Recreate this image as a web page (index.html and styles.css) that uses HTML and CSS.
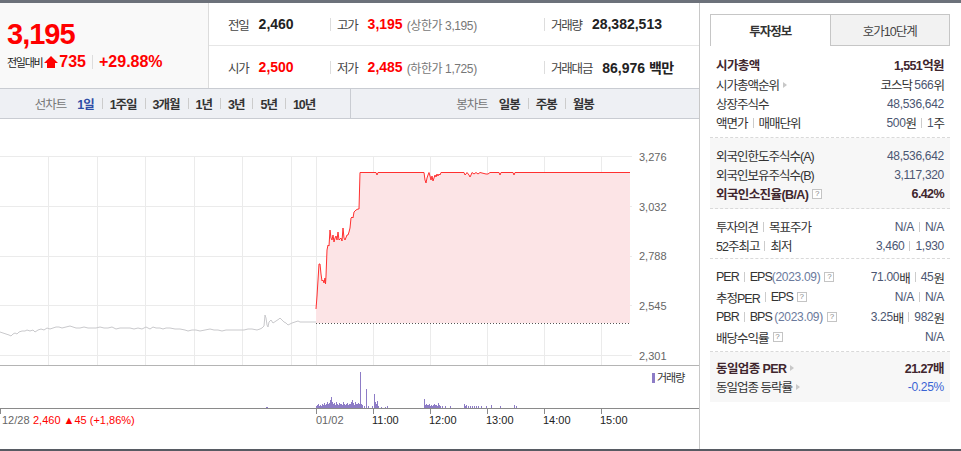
FILE: index.html
```html
<!DOCTYPE html>
<html lang="ko">
<head>
    <meta charset="UTF-8">
    <title>종목 시세</title>
    <link rel="stylesheet" href="styles.css">
</head>
<body>
    <div class="topbar"></div>

    <div class="wrap">
        <div class="main">
            <!-- 현재가 요약 -->
            <div class="summary">
                <div class="price-box">
                    <div class="price-now">3,195</div>
                    <div class="price-change">
                        <span class="lbl">전일대비</span>
                        <svg class="up-ico" width="14" height="13" viewBox="0 0 14 13"><polygon points="7,0 14,7 11,7 11,12 3,12 3,7 0,7" fill="#f00"/></svg>
                        <span class="chg">735</span>
                        <span class="vsep"></span>
                        <span class="chg">+29.88%</span>
                    </div>
                </div>
                <div class="stats">
                    <div class="stat-row">
                        <div class="cell c1"><span class="lbl">전일</span><span class="v">2,460</span></div>
                        <div class="cell c2"><span class="lbl">고가</span><span class="v up">3,195</span><span class="limit">(상한가 3,195)</span></div>
                        <div class="cell c3"><span class="lbl">거래량</span><span class="v">28,382,513</span></div>
                    </div>
                    <div class="stat-row">
                        <div class="cell c1"><span class="lbl">시가</span><span class="v up">2,500</span></div>
                        <div class="cell c2"><span class="lbl">저가</span><span class="v up">2,485</span><span class="limit">(하한가 1,725)</span></div>
                        <div class="cell c3"><span class="lbl">거래대금</span><span class="v">86,976 <span class="unit">백만</span></span></div>
                    </div>
                </div>
            </div>

            <!-- 차트 기간 탭 -->
            <div class="chart-tabs">
                <div class="tab-group line">
                    <span class="tab-title">선차트</span>
                    <span class="tab on">1일</span><span class="tsep"></span>
                    <span class="tab">1주일</span><span class="tsep"></span>
                    <span class="tab">3개월</span><span class="tsep"></span>
                    <span class="tab">1년</span><span class="tsep"></span>
                    <span class="tab">3년</span><span class="tsep"></span>
                    <span class="tab">5년</span><span class="tsep"></span>
                    <span class="tab">10년</span>
                </div>
                <div class="tab-group candle">
                    <span class="tab-title">봉차트</span>
                    <span class="tab">일봉</span><span class="tsep"></span>
                    <span class="tab">주봉</span><span class="tsep"></span>
                    <span class="tab">월봉</span>
                </div>
            </div>

            <!-- 차트 -->
            <div class="chart">
                <svg width="699" height="330" viewBox="0 119 699 330">
                    <g class="grid">
                        <path d="M0 156.5H632M0 206.5H632M0 256.5H632M0 305.5H632M0 355.5H632"/>
                        <path d="M48.5 156V365M97.5 156V365M145.5 156V365M194.5 156V365M242.5 156V365M291.5 156V365M316.5 156V365M373.5 156V365M430.5 156V365M487.5 156V365M544.5 156V365M601.5 156V365"/>
                    </g>
                    <g class="ylabels">
                        <text x="639" y="161">3,276</text>
                        <text x="639" y="211">3,032</text>
                        <text x="639" y="260">2,788</text>
                        <text x="639" y="310">2,545</text>
                        <text x="639" y="360">2,301</text>
                    </g>

                    <!-- 전일 -->
                    <polyline class="prev-line" points="0,332 3,333 6,334 9,335 11,336 13,334 15,333 17,334 19,332 22,331 25,331 27,330 30,331 33,330 35,332 38,330 41,329 44,330 47,328 50,329 53,328 56,327 59,327 62,328 66,327 70,326 73,327 76,328 80,328 84,327 88,328 92,328 96,328 100,327 104,328 108,328 112,327 116,329 120,328 125,328 130,328 134,329 138,328 142,329 146,327 150,329 153,327 156,328 160,328 163,329 166,328 170,328 175,329 180,329 185,330 188,331 192,330 196,330 200,331 205,330 210,329 214,330 218,330 222,331 226,330 230,330 235,330 240,330 244,330 248,329 252,329 257,330 260,329 262,328 264,326 265,315 266,318 267,325 268,327 269,322 271,320 273,323 276,321 279,319 280,318 282,320 284,322 286,323 288,325 290,324 292,323 295,322 298,321 300,322 303,322 306,322 310,322 316,322"/>

                    <!-- 당일 -->
                    <polygon class="today-fill" points="316,309 317,296 319,264 320,264 321,274 322,281 323,280 324,283 325,278 325.5,284 326,276 327,250 328,245 329,246 330,230 331,238 332,240 333,235 334,242 335,238 336,236 337,240 338,232 339,240 341,238 342,241 343,228 344,238 345,240 347,235 348,235 349,232 350,228 351,218 352,217 353,218 354,212 356,210 358,209 359,209 360,172.5 376,172.5 377,175 378,172.5 424,172.5 425,180 426,183 427,178 428,175 429,172.5 430,176 431,180 432,176 433,181 434,178 435,175 436,177 437,174 438,176 439,174 440,175 441,172.5 464,172.5 465,175 466,174 467,172.5 469,175 470,177 471,175 472,172.5 474,174 476,172.5 478,174 480,172.5 486,174 488,174 490,172.5 499,172.5 500,175 501,172.5 513,172.5 514,175 515,172.5 630,172.5 630,323 316,323"/>
                    <polyline class="today-line" points="316,309 317,296 319,264 320,264 321,274 322,281 323,280 324,283 325,278 325.5,284 326,276 327,250 328,245 329,246 330,230 331,238 332,240 333,235 334,242 335,238 336,236 337,240 338,232 339,240 341,238 342,241 343,228 344,238 345,240 347,235 348,235 349,232 350,228 351,218 352,217 353,218 354,212 356,210 358,209 359,209 360,172.5 376,172.5 377,175 378,172.5 424,172.5 425,180 426,183 427,178 428,175 429,172.5 430,176 431,180 432,176 433,181 434,178 435,175 436,177 437,174 438,176 439,174 440,175 441,172.5 464,172.5 465,175 466,174 467,172.5 469,175 470,177 471,175 472,172.5 474,174 476,172.5 478,174 480,172.5 486,174 488,174 490,172.5 499,172.5 500,175 501,172.5 513,172.5 514,175 515,172.5 630,172.5"/>
                    <path class="base-line" d="M316 323.5H630"/>

                    <!-- 거래량 -->
                    <path class="pane-line" d="M0 365.5H699"/>
                    <path class="vol" d="M266.5 408V407M267.5 408V407M316.5 408V406M317.5 408V405M318.5 408V404M319.5 408V406M320.5 408V405M321.5 408V406M322.5 408V404M323.5 408V405M324.5 408V403M325.5 408V405M326.5 408V404M327.5 408V402M328.5 408V404M329.5 408V403M330.5 408V400M331.5 408V397M332.5 408V402M333.5 408V404M334.5 408V403M335.5 408V405M336.5 408V402M337.5 408V404M338.5 408V405M339.5 408V403M340.5 408V404M341.5 408V404M342.5 408V405M343.5 408V402M344.5 408V404M345.5 408V405M346.5 408V404M347.5 408V403M348.5 408V405M349.5 408V404M350.5 408V404M351.5 408V402M352.5 408V400M353.5 408V403M354.5 408V405M355.5 408V402M356.5 408V404M357.5 408V404M358.5 408V403M359.5 408V404M360.5 408V372M361.5 408V404M362.5 408V405M364.5 408V406M366.5 408V389M368.5 408V406M372.5 408V406M374.5 408V394M375.5 408V402M376.5 408V404M377.5 408V401M378.5 408V406M381.5 408V407M385.5 408V407M387.5 408V406M424.5 408V399M425.5 408V405M426.5 408V404M427.5 408V405M428.5 408V405M429.5 408V404M430.5 408V406M431.5 408V405M432.5 408V406M433.5 408V405M434.5 408V404M435.5 408V405M436.5 408V405M437.5 408V406M438.5 408V403M439.5 408V405M440.5 408V406M442.5 408V406M445.5 408V406M450.5 408V406M464.5 408V404M465.5 408V406M466.5 408V405M468.5 408V406M470.5 408V406M472.5 408V406M474.5 408V406M476.5 408V406M478.5 408V406M481.5 408V406M486.5 408V406M491.5 408V405M500.5 408V406M514.5 408V405M516.5 408V406"/>
                    <rect x="652" y="373" width="3" height="10" fill="#8d7cc6"/>
                    <text class="legend" x="657" y="382">거래량</text>

                    <path class="axis" d="M0 408.5H699M0.5 409V414M316.5 409V414M373.5 409V414M430.5 409V414M487.5 409V414M544.5 409V414M601.5 409V414"/>
                    <g class="xlabels">
                        <text x="2" y="424" class="muted">12/28</text>
                        <text x="33" y="424" class="red">2,460 ▲45 (+1,86%)</text>
                        <text x="316" y="424" class="muted">01/02</text>
                        <text x="372" y="424">11:00</text>
                        <text x="429" y="424">12:00</text>
                        <text x="486" y="424">13:00</text>
                        <text x="543" y="424">14:00</text>
                        <text x="600" y="424">15:00</text>
                    </g>
                </svg>
            </div>
        </div>

        <!-- 투자정보 -->
        <div class="side">
            <div class="side-tabs">
                <div class="side-tab on">투자정보</div>
                <div class="side-tab">호가10단계</div>
            </div>

            <div class="info first">
                <div class="row big"><span class="l strong">시가총액</span><span class="r strong">1,551억원</span></div>
                <div class="row"><span class="l">시가총액순위<i class="arr"></i></span><span class="r">코스닥&nbsp;<b class="n">566</b>위</span></div>
                <div class="row"><span class="l">상장주식수</span><span class="r"><b class="n">48,536,642</b></span></div>
                <div class="row"><span class="l">액면가<i class="bar"></i>매매단위</span><span class="r"><b class="n">500</b>원<i class="bar"></i><b class="n">1</b>주</span></div>
            </div>

            <div class="info gray">
                <div class="row"><span class="l">외국인한도주식수(A)</span><span class="r"><b class="n">48,536,642</b></span></div>
                <div class="row"><span class="l">외국인보유주식수(B)</span><span class="r"><b class="n">3,117,320</b></span></div>
                <div class="row"><span class="l strong">외국인소진율(B/A)<i class="q">?</i></span><span class="r strong">6.42%</span></div>
            </div>

            <div class="info third">
                <div class="row"><span class="l">투자의견<i class="bar"></i>목표주가</span><span class="r"><b class="n">N/A</b><i class="bar"></i><b class="n">N/A</b></span></div>
                <div class="row"><span class="l">52주최고<i class="bar"></i>최저</span><span class="r"><b class="n">3,460</b><i class="bar"></i><b class="n">1,930</b></span></div>
            </div>

            <div class="info per">
                <div class="row"><span class="l">PER<i class="bar"></i>EPS<em class="date">(2023.09)</em><i class="q">?</i></span><span class="r"><b class="n">71.00</b>배<i class="bar"></i><b class="n">45</b>원</span></div>
                <div class="row"><span class="l">추정PER<i class="bar"></i>EPS<i class="q">?</i></span><span class="r"><b class="n">N/A</b><i class="bar"></i><b class="n">N/A</b></span></div>
                <div class="row"><span class="l">PBR<i class="bar"></i>BPS&nbsp;<em class="date">(2023.09)</em><i class="q">?</i></span><span class="r"><b class="n">3.25</b>배<i class="bar"></i><b class="n">982</b>원</span></div>
                <div class="row"><span class="l">배당수익률<i class="q">?</i></span><span class="r"><b class="n">N/A</b></span></div>
            </div>

            <div class="info gray last">
                <div class="row"><span class="l strong">동일업종 PER<i class="arr"></i></span><span class="r strong">21.27배</span></div>
                <div class="row"><span class="l">동일업종 등락률<i class="arr"></i></span><span class="r blue">-0.25%</span></div>
            </div>
        </div>
    </div>

    <div class="bottombar"></div>
</body>
</html>
```

FILE: styles.css
```css
/* 시세 화면 */
* {
    box-sizing: border-box;
}

body {
    margin: 0;
    width: 961px;
    height: 451px;
    overflow: hidden;
    font-family: "Liberation Sans", "Noto Sans CJK KR", sans-serif;
    color: #333;
    background: #fff;
}

.topbar {
    height: 3px;
    background: #6c717a;
}

.bottombar {
    height: 2px;
    background: #575b63;
}

.wrap {
    display: flex;
    height: 446px;
}

.main {
    width: 700px;
    border-right: 1px solid #c8c8c8;
    display: flex;
    flex-direction: column;
}

/* 요약 */
.summary {
    display: flex;
    height: 85px;
}

.price-box {
    width: 209px;
    border-right: 1px solid #dcdcdc;
    background: #f9f9f9;
    padding: 17px 0 0 7px;
}

.price-now {
    font-size: 29px;
    line-height: 29px;
    font-weight: bold;
    color: #f00;
    letter-spacing: -1px;
}

.price-change {
    display: flex;
    align-items: center;
    height: 18px;
    margin-top: 4px;
}

.price-change .lbl {
    font-size: 11px;
    letter-spacing: -1.3px;
    color: #222;
    margin-right: 2px;
}

.up-ico {
    margin-right: 1px;
}

.chg {
    font-size: 16px;
    font-weight: bold;
    color: #f00;
}

.vsep {
    width: 1px;
    height: 14px;
    background: #ddd;
    margin: 0 6px;
}

.stats {
    flex: 1;
    display: flex;
    flex-direction: column;
}

.stat-row {
    height: 42px;
    display: flex;
    align-items: center;
}

.stat-row + .stat-row {
    height: 43px;
    border-top: 1px solid #e6e6e6;
}

.cell {
    display: flex;
    align-items: center;
    white-space: nowrap;
}

.c1 {
    width: 121px;
    padding-left: 19px;
}

.c2 {
    width: 214px;
}

.c3 {
    flex: 1;
}

.c2::before, .c3::before {
    content: "";
    width: 1px;
    height: 13px;
    background: #ddd;
    margin-right: 6px;
}

.cell .lbl {
    font-size: 12.5px;
    letter-spacing: -1.2px;
    color: #444;
    margin-right: 10px;
}

.v {
    font-size: 14px;
    font-weight: bold;
    color: #222;
}

.v.up {
    color: #f00;
}

.unit {
    letter-spacing: -0.5px;
}

.limit {
    font-size: 12px;
    color: #777;
    letter-spacing: -0.4px;
    margin-left: 4px;
}

/* 차트 탭 */
.chart-tabs {
    display: flex;
    height: 31px;
    border-top: 1px solid #c9ccd2;
    border-bottom: 1px solid #c9ccd2;
    background: #eef0f4;
}

.tab-group {
    display: flex;
    align-items: center;
    justify-content: center;
    font-size: 12.5px;
    white-space: nowrap;
}

.tab-group.line {
    width: 351px;
    border-right: 1px solid #c9ccd2;
}

.tab-group.candle {
    flex: 1;
}

.tab-title {
    color: #777;
    letter-spacing: -1px;
    margin-right: 11px;
}

.tab {
    font-weight: bold;
    color: #333;
    letter-spacing: -1px;
}

.tab.on {
    color: #2e4da6;
}

.tsep {
    width: 1px;
    height: 11px;
    background: #ccc;
    margin: 0 7px 0 8px;
}

/* 차트 */
.chart {
    height: 330px;
}

.chart svg {
    display: block;
}

.chart text {
    font-family: "Liberation Sans", "Noto Sans CJK KR", sans-serif;
    font-size: 11px;
    fill: #222;
}

.grid path {
    stroke: #ebebeb;
    stroke-width: 1;
    fill: none;
}

.chart .ylabels text {
    fill: #666;
}

.prev-line {
    fill: none;
    stroke: #c9c9cc;
    stroke-width: 1;
}

.today-fill {
    fill: #fce4e6;
}

.today-line {
    fill: none;
    stroke: #ff3030;
    stroke-width: 1;
}

.base-line {
    stroke: #555;
    stroke-width: 1;
    stroke-dasharray: 1 2;
}

.pane-line {
    stroke: #b4b4b4;
    stroke-width: 1;
}

.vol {
    stroke: #8d7cc6;
    stroke-width: 1;
}

.axis {
    stroke: #8a8a8a;
    stroke-width: 1;
    fill: none;
}

.chart text.legend {
    fill: #333;
    letter-spacing: -1px;
}

.chart text.muted {
    fill: #666;
}

.chart text.red {
    fill: #f00;
}

/* 투자정보 */
.side {
    width: 261px;
    padding: 11px 11px 0 10px;
    font-size: 12.5px;
}

.side-tabs {
    display: flex;
    height: 32px;
}

.side-tab {
    flex: 1;
    display: flex;
    align-items: center;
    justify-content: center;
    letter-spacing: -1px;
    border: 1px solid #c6c6c6;
    background: #f2f2f2;
    color: #444;
}

.side-tab.on {
    border-right: none;
    border-bottom: none;
    background: #fff;
    font-weight: bold;
    color: #333;
}

.info {
    padding: 8px 6px 5px;
    border-bottom: 1px dashed #d9d9d9;
}

.info.gray {
    background: #f7f7f7;
}

.info.third {
    padding-bottom: 3px;
}

.info.per {
    padding-bottom: 4px;
}

.info.per .row {
    height: 20px;
}

.info.last {
    padding: 6px 6px;
    border-bottom: none;
}

.row {
    display: flex;
    justify-content: space-between;
    align-items: center;
    height: 19px;
    white-space: nowrap;
}

.row.big {
    height: 21px;
}

.l, .r {
    display: flex;
    align-items: center;
    letter-spacing: -1px;
}

.strong {
    font-weight: bold;
    color: #40262e;
    letter-spacing: -0.6px;
}

.n {
    font-size: 12px;
    font-weight: normal;
    color: #4b5672;
    letter-spacing: -0.3px;
}

.blue {
    font-size: 12px;
    color: #3a64d4;
    letter-spacing: -0.3px;
}

.date {
    font-size: 12px;
    font-style: normal;
    color: #6b7a9c;
    letter-spacing: -0.3px;
}

.bar {
    display: inline-block;
    width: 1px;
    height: 10px;
    background: #ccc;
    margin: 0 5px;
}

.arr {
    display: inline-block;
    border-left: 4px solid #c8c8c8;
    border-top: 3px solid transparent;
    border-bottom: 3px solid transparent;
    margin-left: 4px;
}

.q {
    display: inline-block;
    width: 10px;
    height: 10px;
    border: 1px solid #c4c4c4;
    background: #fff;
    font-size: 8px;
    line-height: 8px;
    font-style: normal;
    font-weight: normal;
    text-align: center;
    color: #888;
    letter-spacing: 0;
    margin-left: 4px;
}
```
